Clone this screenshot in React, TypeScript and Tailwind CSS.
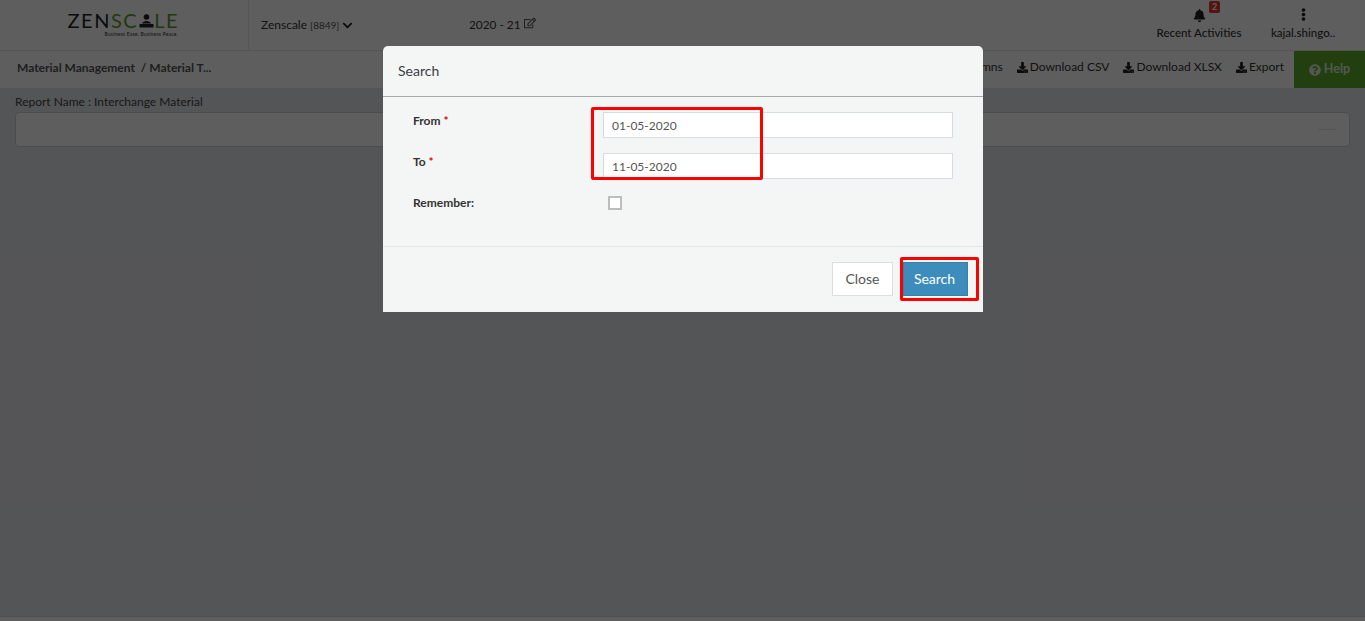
import { FaBell, FaChevronDown, FaDownload, FaEllipsisV, FaQuestionCircle, FaRegEdit } from "react-icons/fa";

function Logo() {
  return (
    <div className="flex flex-col items-end w-[112px] leading-none">
      <div className="flex items-end h-[17px] text-[20px] font-normal tracking-[1.5px] leading-[17px]">
        <span className="text-[#222222]">ZEN</span>
        <span className="text-[#5a9a32]">SC</span>
        <svg width="15" height="14" viewBox="0 0 15 14" className="mb-[1px] mx-[0.5px]" fill="#222222">
          <circle cx="7.5" cy="3" r="2.8" />
          <path d="M3 9.5 C4 6 11 6 12 9.5 Z" />
          <rect x="0.5" y="10" width="14" height="3.5" rx="0.5" />
        </svg>
        <span className="text-[#5a9a32]">LE</span>
      </div>
      <div className="text-[5px] mt-[3px] mr-[1px] text-[#333333] tracking-[0.2px] whitespace-nowrap">Business Ease. Business Peace.</div>
    </div>
  );
}

function Action({ label }: { label: string }) {
  return (
    <span className="flex items-center gap-[2px] whitespace-nowrap">
      <FaDownload className="text-[11px] text-[#222222]" />
      {label}
    </span>
  );
}

function Field({ label, value }: { label: string; value: string }) {
  return (
    <div className="flex h-[26px]">
      <label className="w-[220px] pl-[30px] text-[12px] font-bold text-[#333333]">
        {label} <span className="text-[#e00000]">*</span>
      </label>
      <div className="w-[350px] h-[26px] bg-white border border-[#d5dce8] pl-2 pt-[2px] flex items-center text-[12px] text-[#555555]">
        {value}
      </div>
    </div>
  );
}

export default function App() {
  return (
    <div className="relative h-[621px] w-[1365px] overflow-hidden bg-[#e5e6ea] font-['Lato','Open_Sans',sans-serif] text-[12px] text-[#333333]">
      <header className="h-[51px] bg-white border-b border-[#e6e6e6] flex">
        <div className="w-[249px] border-r border-[#e6e6e6] pl-[67px] pt-[12px]">
          <Logo />
        </div>
        <div className="w-[220px] pl-3 pt-[16px] flex items-start gap-[3px] text-[12px] whitespace-nowrap">
          <span>Zenscale <span className="text-[10px] text-[#555555]">[8849]</span></span>
          <FaChevronDown className="text-[11px] mt-[4px] text-[#222222]" />
        </div>
        <div className="pt-[16px] flex items-start gap-[4px] text-[11.8px]">
          <span>2020 - 21</span>
          <FaRegEdit className="text-[12px] mt-[1px] text-[#555555]" />
        </div>
        <div className="ml-auto flex">
          <div className="relative flex flex-col items-center w-[100px] pt-[9px]">
            <FaBell className="text-[13px] text-[#222222]" />
            <span className="absolute left-[60px] top-[1px] w-[11px] h-[12px] rounded-[2px] bg-[#e03a2f] text-white text-[9px] font-bold leading-[12px] text-center">2</span>
            <span className="mt-[2px] text-[11.5px] font-medium whitespace-nowrap">Recent Activities</span>
          </div>
          <div className="flex flex-col items-center w-[90px] ml-[9px] mr-[17px] pt-[8px]">
            <FaEllipsisV className="text-[11px] text-[#222222] h-[13px]" />
            <span className="mt-[3px] text-[11.5px] font-medium whitespace-nowrap">kajal.shingo..</span>
          </div>
        </div>
      </header>

      <div className="h-[37px] bg-white flex items-center">
        <div className="pl-[17px] -mt-[3px] text-[12px] font-bold text-[#555555] whitespace-nowrap">
          Material Management <span className="ml-[3px]">/ Material T...</span>
        </div>
        <div className="ml-auto flex items-center h-full">
          <div className="flex items-center gap-[14px] text-[12px] -mt-[5px] mr-[10px]">
            <span>Columns</span>
            <Action label="Download CSV" />
            <Action label="Download XLSX" />
            <Action label="Export" />
          </div>
          <div className="w-[71px] h-full bg-[#5cab2c] flex items-center justify-center gap-[3px] text-white/80 font-bold text-[12.5px]">
            <FaQuestionCircle className="text-[12px]" />
            Help
          </div>
        </div>
      </div>

      <main className="px-[15px] pt-[7px]">
        <div className="text-[12px] leading-[14px] text-[#444444]">Report Name : Interchange Material</div>
        <div className="mt-[3px] h-[35px] bg-white border border-[#cfcfcf] rounded-[4px] flex items-center justify-end pr-[14px]">
          <span className="w-[17px] h-px bg-[#e6e6e6]" />
        </div>
      </main>

      <div className="absolute left-0 right-0 top-[616px] h-[5px] bg-white border-t border-[#d5d5d5]" />

      <div className="absolute inset-0 bg-black/[0.63]" />

      <div className="absolute left-[383px] top-[46px] w-[600px] h-[266px] bg-[#f4f6f5] rounded-t-[5px] flex flex-col">
        <div className="h-[51px] border-b border-[#a8a8a8] pl-[15px] pb-[2px] flex items-center text-[14px] text-[#3a3f44] shrink-0">
          Search
        </div>
        <div className="h-[150px] border-b border-[#e5e7e6] pt-[15px] flex flex-col gap-[15px] shrink-0">
          <Field label="From" value="01-05-2020" />
          <Field label="To" value="11-05-2020" />
          <div className="flex items-center h-[14px] mt-[2px]">
            <label className="w-[190px] pl-[30px] text-[12px] font-bold text-[#333333]">Remember:</label>
            <span className="ml-[35px] w-[14px] h-[14px] bg-white border-2 border-[#bdbdbd]" />
          </div>
        </div>
        <div className="flex-1 flex items-start justify-end gap-[10px] pr-[15px] pt-[15px] text-[14px]">
          <button className="w-[61px] h-[34px] pb-[2px] bg-white border border-[#dddddd] text-[#555555]">Close</button>
          <button className="w-[65px] h-[34px] pb-[2px] pr-[2px] bg-[#3c8dbc] border border-[#367fa9] text-white">Search</button>
        </div>
      </div>

      <div className="absolute left-[591px] top-[107px] w-[172px] h-[73px] border-[3px] border-[#ff0000] rounded-[2px]" />
      <div className="absolute left-[900px] top-[257px] w-[79px] h-[44px] border-[3px] border-[#ff0000] rounded-[2px]" />
    </div>
  );
}
